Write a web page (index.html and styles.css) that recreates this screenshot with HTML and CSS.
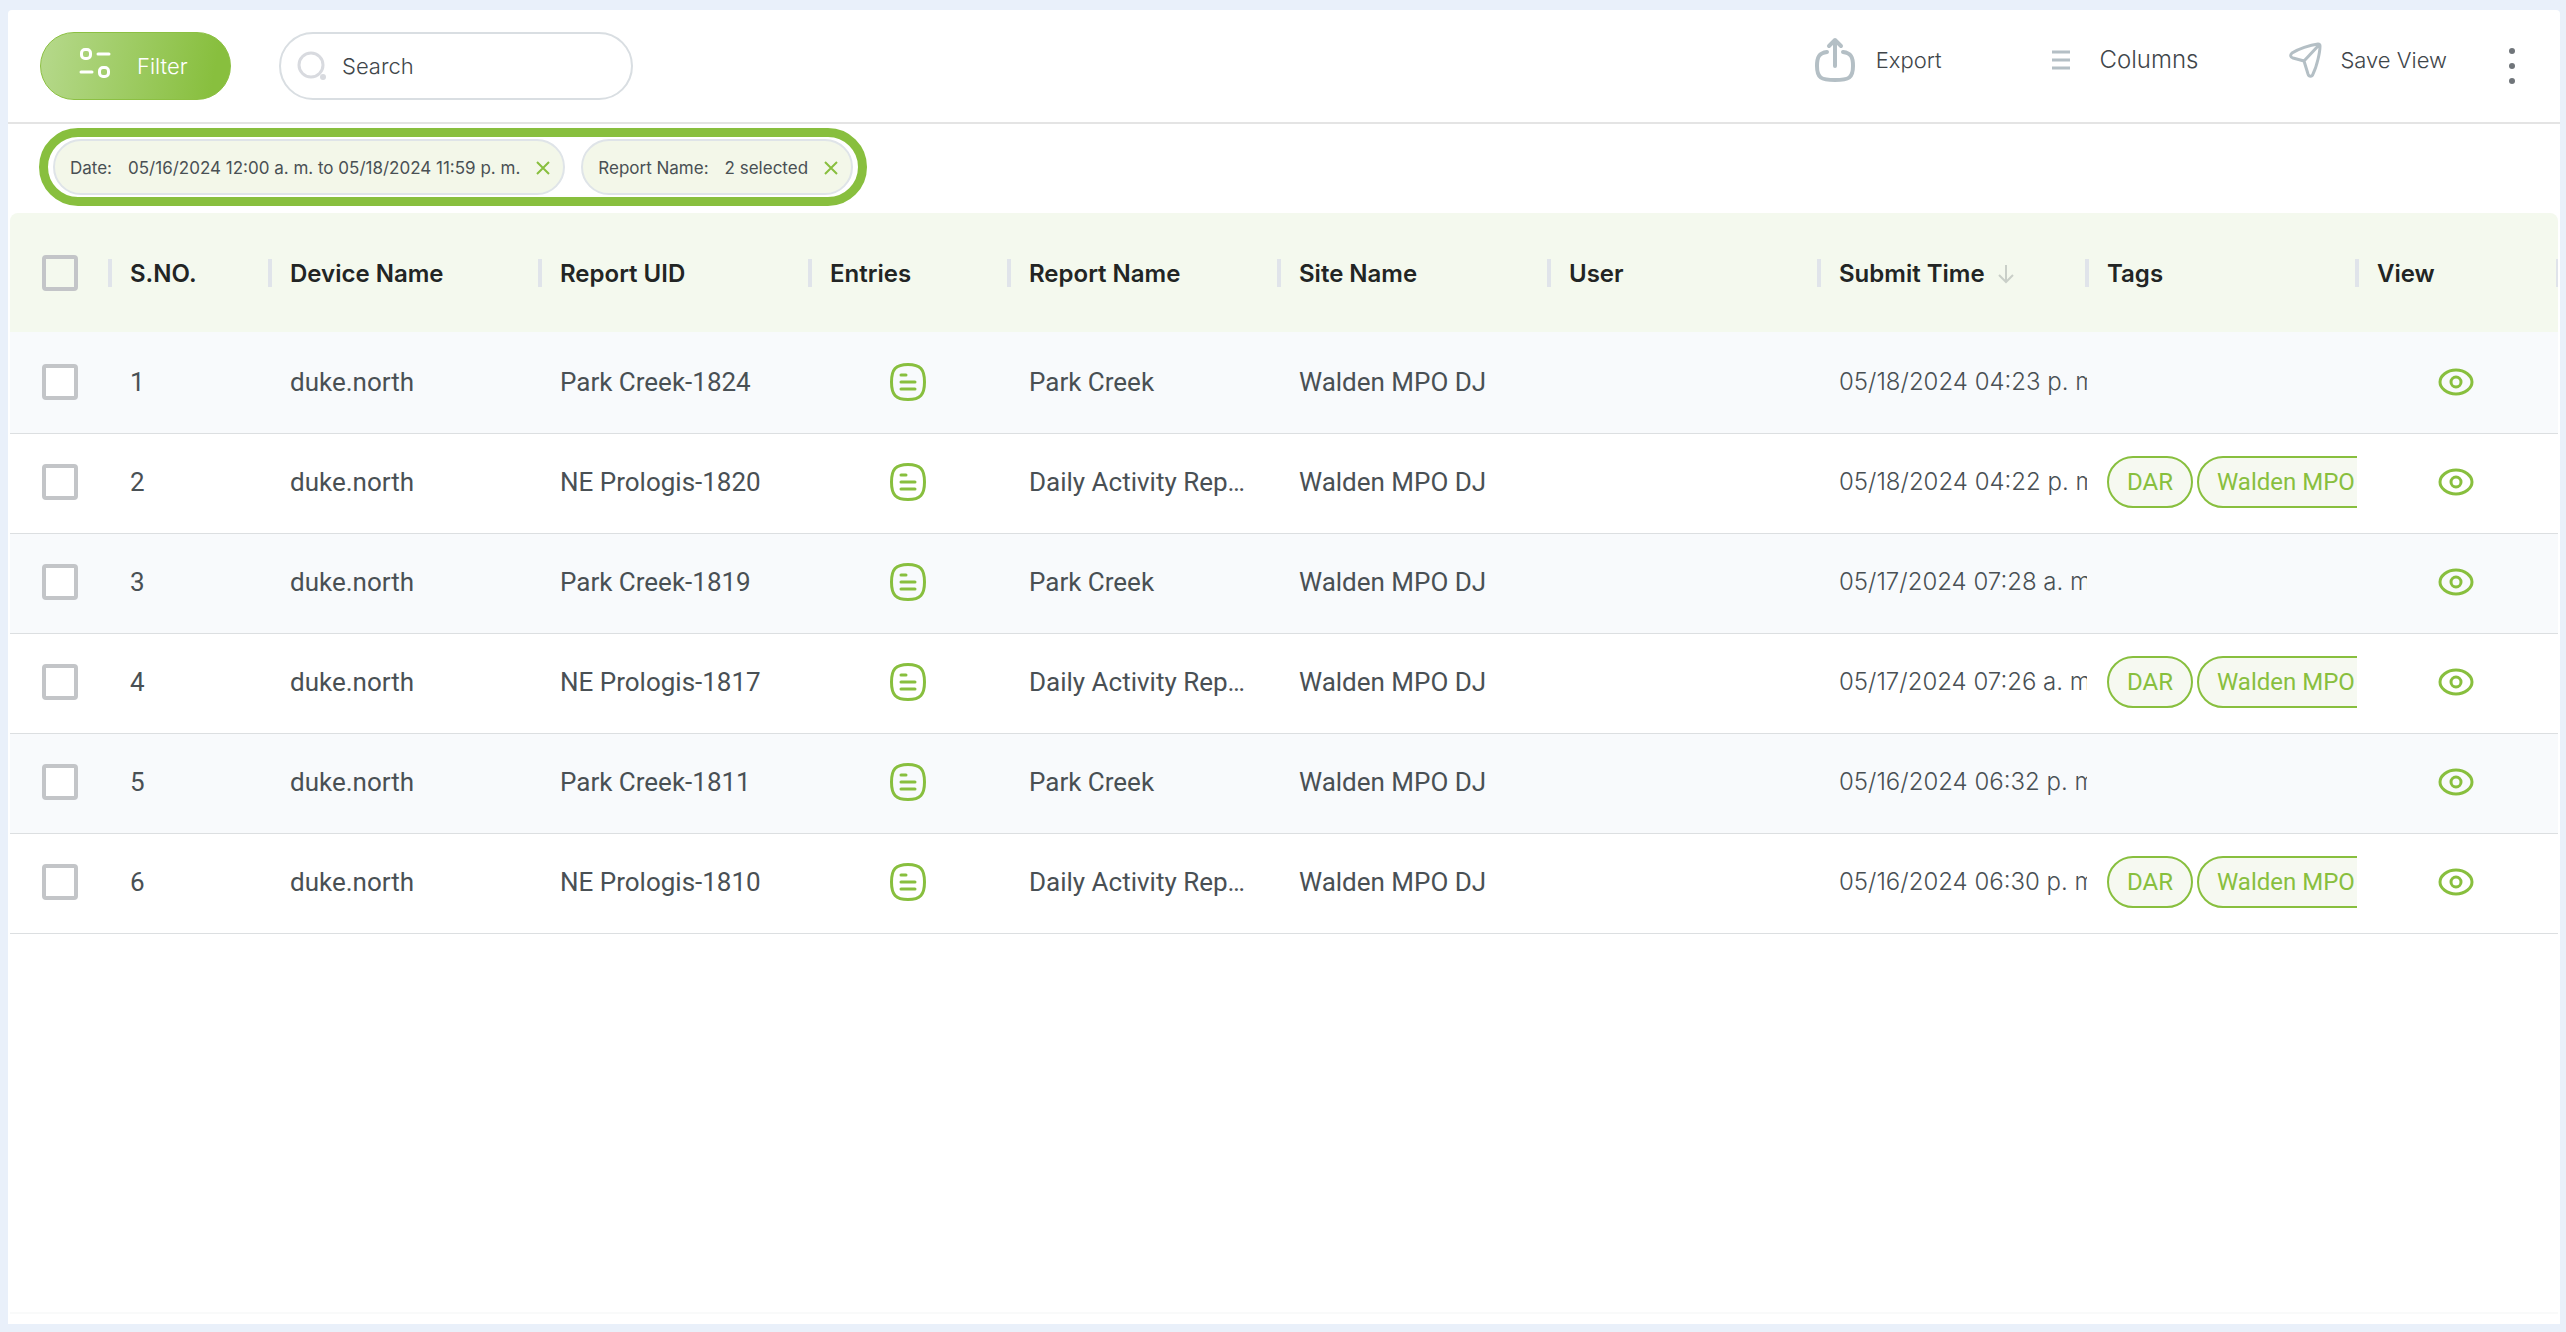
FILE: index.html
```html
<!DOCTYPE html>
<html lang="en">
<head>
<meta charset="utf-8">
<title>Reports</title>
<link rel="stylesheet" href="styles.css">
</head>
<body>
<svg class="defs" aria-hidden="true">
  <symbol id="i-entry" viewBox="0 0 40 40"><path d="M20 2.500C32.500 2.500 36.500 7.500 36.500 20S32.500 37.500 20 37.500 3.500 32.500 3.500 20 7.500 2.500 20 2.500Z"/><path d="M13 13h5M13 20h14M13 27h14"/></symbol>
  <symbol id="i-eye" viewBox="0 0 36 28"><path d="M18 2C27 2 34 8 34 14S27 26 18 26 2 20 2 14 9 2 18 2Z"/><circle cx="18" cy="14" r="5"/></symbol>
</svg>
<main class="panel">
  <header class="toolbar">
    <button class="filter" type="button">
      <svg width="32" height="38" viewBox="0 0 32 38" fill="none" stroke="currentColor" stroke-width="3" stroke-linecap="round"><rect x="2.500" y="2.500" width="9" height="9" rx="3.500"/><path d="M19 7h11M2 25h11"/><rect x="20.500" y="20.500" width="9" height="9" rx="3.500"/></svg>
      Filter
    </button>
    <label class="search">
      <svg width="30" height="30" viewBox="0 0 30 30"><circle cx="14" cy="14" r="12" fill="none" stroke="#d8dadf" stroke-width="3"/><circle cx="26" cy="26" r="3" fill="#d8dadf"/></svg>
      <input type="text" placeholder="Search" aria-label="Search">
    </label>
    <nav class="actions">
      <button type="button" class="action"><svg width="42" height="46" viewBox="0 0 42 46" fill="none" stroke="#b4bfc5" stroke-width="4" stroke-linecap="round" stroke-linejoin="round"><path d="M13 15C5 16 3 20 3 29 3 41 7 43 21 43S39 41 39 29C39 20 37 16 29 15M21 29V3M15 9l6-6 6 6"/></svg>Export</button>
      <button type="button" class="action large"><svg width="18" height="20" viewBox="0 0 18 20" fill="none" stroke="#b4bfc5" stroke-width="3"><path d="M0 2h18M0 10h18M0 18h18"/></svg>Columns</button>
      <button type="button" class="action"><svg width="34" height="36" viewBox="0 0 34 36" fill="none" stroke="#b4bfc5" stroke-width="3" stroke-linejoin="round"><path d="M30 2C22 3 10 7 4 11 2 13 2 15 5 16L16 19 20 32C21 35 24 35 25 32 29 24 32 10 32 4Q32 2 30 2ZM16 19L31 3"/></svg>Save View</button>
      <button type="button" class="more" aria-label="More"><svg width="6" height="36" viewBox="0 0 6 36" fill="#70757a"><circle cx="3" cy="3" r="3"/><circle cx="3" cy="18" r="3"/><circle cx="3" cy="33" r="3"/></svg></button>
    </nav>
  </header>
  <section class="chips">
    <div class="ring">
      <div class="chip"><span>Date:</span><span>05/16/2024 12:00 a. m. to 05/18/2024 11:59 p. m.</span><button type="button" aria-label="Remove date"><svg width="14" height="14" viewBox="0 0 14 14"><path d="M1 1l12 12M13 1L1 13"/></svg></button></div>
      <div class="chip"><span>Report Name:</span><span>2 selected</span><button type="button" aria-label="Remove report name"><svg width="14" height="14" viewBox="0 0 14 14"><path d="M1 1l12 12M13 1L1 13"/></svg></button></div>
    </div>
  </section>
  <div class="grid">
    <table>
      <colgroup><col class="c-check"><col class="c-no"><col class="c-wide"><col class="c-wide"><col class="c-mid"><col class="c-wide"><col class="c-wide"><col class="c-wide"><col class="c-time"><col class="c-wide"><col></colgroup>
      <thead><tr><th><input type="checkbox" aria-label="Select all"></th><th>S.NO.</th><th>Device Name</th><th>Report UID</th><th>Entries</th><th>Report Name</th><th>Site Name</th><th>User</th><th>Submit Time <svg class="sort" width="18" height="20" viewBox="0 0 18 20"><path d="M9 1v17M2 11l7 7 7-7"/></svg></th><th>Tags</th><th>View</th></tr></thead>
      <tbody id="rows"></tbody>
    </table>
  </div>
</main>
<script src="rows.js"></script>
</body>
</html>
```
FILE: styles.css
```css
* { box-sizing: border-box; }
body { margin: 0; min-height: 100vh; padding: 10px 6px 8px 8px; display: flex; background: #e9f0fa; color: #495054; font: 26px/32px Roboto, sans-serif; }
.defs { display: none; }
.panel { flex: 1; min-width: 0; display: flex; flex-direction: column; background: #fff; border-radius: 4px 4px 0 0; padding-bottom: 10px; }
button { font: inherit; color: inherit; background: none; border: 0; padding: 0; }
.toolbar { display: flex; align-items: center; height: 114px; padding: 0 45px 0 32px; border-bottom: 2px solid #e4e4e4; font: 300 22px/28px Inter, sans-serif; }
.filter { display: flex; align-items: center; gap: 26px; width: 191px; height: 68px; padding-left: 38px; border: 1px solid #8cc043; border-radius: 34px; color: #fff; background: linear-gradient(100deg, #b6d98c, #88bf3e 90%); }
.search { display: flex; align-items: center; gap: 15px; width: 354px; height: 68px; margin-left: 48px; padding: 0 16px; border: 2px solid #d9dee2; border-radius: 34px; }
.search input { flex: 1; min-width: 0; border: 0; padding: 0; outline: 0; background: none; font: inherit; color: #495054; }
.search input::placeholder { color: #3f464a; opacity: 1; }
.actions { display: flex; align-items: center; margin-left: auto; padding-bottom: 12px; color: #3f464a; }
.action { display: flex; align-items: center; gap: 20px; margin-right: 110px; }
.large { font-size: 24px; gap: 30px; margin-right: 90px; }
.action:nth-child(3) { gap: 18px; margin-right: 62px; }
.more { display: flex; padding-top: 12px; }
.chips { padding: 4px 32px 7px 31px; display: flex; }
.ring { display: flex; gap: 16px; padding: 2px 5px; border: 9px solid #88bf3e; border-radius: 39px; }
.chip { display: flex; align-items: center; gap: 16px; height: 56px; padding: 2px 13px 0 15px; border: 2px solid #dfe4e8; border-radius: 28px; background: #f3f7e9; font: 17px/24px Inter, sans-serif; white-space: nowrap; }
.chip svg, .sort { display: block; fill: none; stroke: #88bf3e; stroke-width: 2; }
.grid { flex: 1; margin: 0 2px; border-bottom: 2px solid #f9fafa; overflow: hidden; border-radius: 8px 8px 0 0; }
table { width: 100%; table-layout: fixed; border-collapse: separate; border-spacing: 0; }
.c-check { width: 100px; } .c-no { width: 160px; } .c-wide { width: 270px; } .c-mid { width: 199px; } .c-time { width: 268px; }
th { height: 121px; padding: 2px 0 0 20px; text-align: left; font: 600 24px/32px Inter, sans-serif; color: #222524; background: linear-gradient(#e0e4ea, #e0e4ea) left 46px / 2px 28px no-repeat, linear-gradient(#e0e4ea, #e0e4ea) right 0 top 46px / 2px 28px no-repeat, #f4f9ee; white-space: nowrap; border-bottom: 2px solid #f8fafc; }
th:first-child { padding-top: 0; background: linear-gradient(#e0e4ea, #e0e4ea) right 0 top 46px / 2px 28px no-repeat, #f4f9ee; }
td { height: 100px; padding: 0 0 4px 20px; border-bottom: 1px solid #dcdfe1; white-space: nowrap; overflow: hidden; }
tbody tr:nth-child(odd) { background: #f8fafc; }
td:first-child, th:first-child { padding-left: 32px; }
input[type=checkbox] { appearance: none; display: block; width: 36px; height: 36px; margin: 0; border: 4px solid #c3c5c8; border-radius: 4px; background: #fff; }
th input[type=checkbox] { background: none; }
.sort { display: inline-block; margin-left: 6px; stroke: #c9cfc8; vertical-align: -2px; }
.time { font-size: 24px; font-family: Inter, sans-serif; font-weight: 300; }
.icon { padding: 0 4px 4px 0; }
.icon button { display: block; margin: 0 auto; }
.icon svg { display: block; fill: none; stroke: #88bf3e; stroke-width: 3; stroke-linecap: round; }
.tags div { display: flex; gap: 4px; }
.tags span { flex: none; height: 52px; padding: 0 18px; border: 2px solid #88bf3e; border-radius: 26px; background: #f6f9f1; color: #88bf3e; font-size: 24px; line-height: 48px; }
```
FILE: rows.js
```js
const rows = [
  ["Park Creek-1824", "05/18/2024 04:23 p. m."],
  ["NE Prologis-1820", "05/18/2024 04:22 p. m."],
  ["Park Creek-1819", "05/17/2024 07:28 a. m."],
  ["NE Prologis-1817", "05/17/2024 07:26 a. m."],
  ["Park Creek-1811", "05/16/2024 06:32 p. m."],
  ["NE Prologis-1810", "05/16/2024 06:30 p. m."]
];
document.getElementById("rows").innerHTML = rows.map(([uid, time], i) => {
  const daily = uid.startsWith("NE");
  return `<tr><td><input type="checkbox" aria-label="Select row ${i + 1}"></td><td>${i + 1}</td><td>duke.north</td><td>${uid}</td>
    <td class="icon"><button type="button" aria-label="Entries"><svg width="40" height="40"><use href="#i-entry"/></svg></button></td>
    <td>${daily ? "Daily Activity Rep…" : "Park Creek"}</td><td>Walden MPO DJ</td><td></td><td class="time">${time}</td>
    <td class="tags">${daily ? "<div><span>DAR</span><span>Walden MPO DJ</span></div>" : ""}</td>
    <td class="icon"><button type="button" aria-label="View"><svg width="36" height="28"><use href="#i-eye"/></svg></button></td></tr>`;
}).join("");
```
